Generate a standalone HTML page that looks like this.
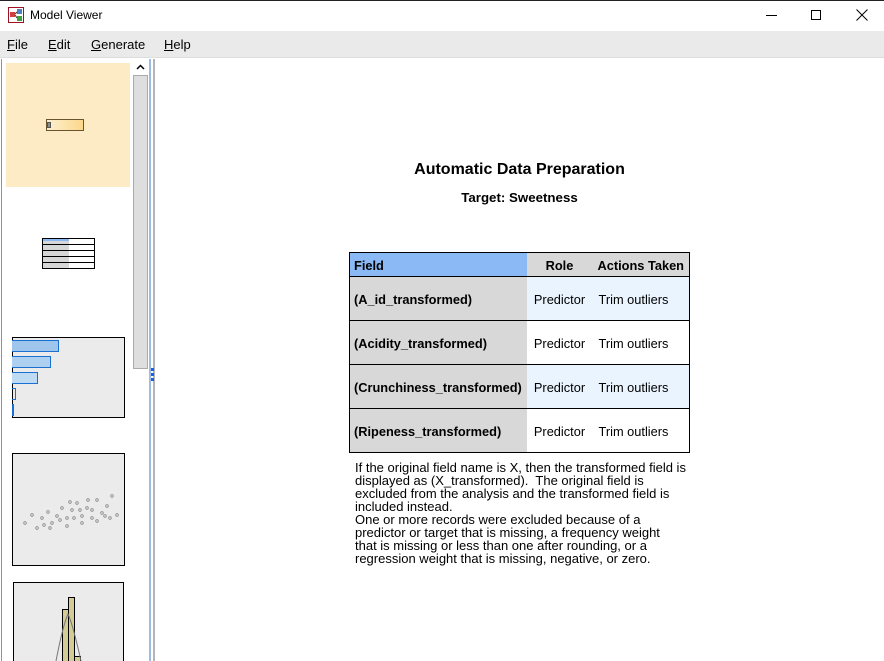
<!DOCTYPE html>
<html><head><meta charset="utf-8"><style>
*{margin:0;padding:0;box-sizing:border-box}
body{width:884px;height:661px;overflow:hidden;background:#fff;font-family:"Liberation Sans",Arial,sans-serif;position:relative}
.a{position:absolute}
.menu span{position:absolute;font-size:13px;color:#000}
table{border-collapse:collapse;position:absolute;left:349px;top:252px;width:341px;font-size:12.8px;table-layout:fixed}
td{border:1px solid #000;border-left:none;border-right:none;height:44px;padding:2px 4px 0 4px;white-space:nowrap}
</style></head><body>
<div class="a" style="left:0;top:0;width:884px;height:31px;background:#fff;border-top:1px solid #222"></div>
<svg class="a" style="left:8px;top:7px" width="16" height="16"><rect x="0.5" y="0.5" width="15" height="15" fill="#fff" stroke="#a01020"/><rect x="2" y="5" width="5" height="5" fill="#d04040"/><rect x="9" y="2" width="5" height="5" fill="#5080c0"/><rect x="9" y="9" width="5" height="5" fill="#40a040"/><path d="M7 7L9 5M7 8L9 11" stroke="#333"/></svg>
<div class="a" style="left:30px;top:8px;font-size:12px">Model Viewer</div>
<div class="a" style="left:766px;top:15px;width:11px;height:1px;background:#000"></div>
<div class="a" style="left:811px;top:10px;width:10px;height:10px;border:1px solid #000"></div>
<svg class="a" style="left:856px;top:9px" width="12" height="12"><path d="M0.5 0.5L11.5 11.5M11.5 0.5L0.5 11.5" stroke="#000"/></svg>
<div class="a menu" style="left:0;top:31px;width:884px;height:27px;background:#eaeaea;border-bottom:1px solid #ddd">
<span style="left:7px;top:6px"><u>F</u>ile</span><span style="left:48px;top:6px"><u>E</u>dit</span><span style="left:91px;top:6px"><u>G</u>enerate</span><span style="left:164px;top:6px"><u>H</u>elp</span></div>
<div class="a" style="left:1px;top:59px;width:1px;height:602px;background:#6a9ad8"></div>
<div class="a" style="left:6px;top:63px;width:124px;height:124px;background:#fdebc6"></div>
<div class="a" style="left:46px;top:119px;width:38px;height:12px;border:1px solid #6a5530;background:linear-gradient(90deg,#fdf0d0,#fbd88a)"></div>
<div class="a" style="left:47px;top:122px;width:4px;height:6px;background:#8a9088;border:1px solid #555"></div>
<div class="a" style="left:42px;top:238px;width:53px;height:31px;border:1px solid #000;background:repeating-linear-gradient(#fff 0 5px,#000 5px 6px)"></div>
<div class="a" style="left:43px;top:239px;width:26px;height:29px;background:repeating-linear-gradient(#d6d6d6 0 5px,#000 5px 6px)"></div>
<div class="a" style="left:43px;top:239px;width:26px;height:2px;background:#8ab9f5"></div>
<div class="a" style="left:12px;top:337px;width:113px;height:81px;border:1px solid #000;background:#ebebeb"></div>
<div class="a" style="left:12px;top:340px;width:47px;height:12px;background:#9fc5ec;border:1px solid #1a70d0;border-left:none"></div>
<div class="a" style="left:12px;top:356px;width:39px;height:12px;background:#add0f0;border:1px solid #1a70d0;border-left:none"></div>
<div class="a" style="left:12px;top:372px;width:26px;height:12px;background:#bfdaf3;border:1px solid #1a70d0;border-left:none"></div>
<div class="a" style="left:12px;top:388px;width:4px;height:12px;border:1px solid #1a70d0;border-left:none"></div>
<div class="a" style="left:12px;top:404px;width:2px;height:12px;background:#1a70d0"></div>
<div class="a" style="left:12px;top:453px;width:113px;height:113px;border:1px solid #000;background:#ebebeb"></div>
<svg class="a" style="left:22px;top:488px" width="100" height="45"><g fill="none" stroke="#888" stroke-width="0.8">
<circle cx="3" cy="35" r="1.3"/><circle cx="10" cy="27" r="1.3"/><circle cx="15" cy="40" r="1.3"/><circle cx="20" cy="30" r="1.3"/><circle cx="26" cy="24" r="1.3"/><circle cx="30" cy="35" r="1.3"/><circle cx="35" cy="28" r="1.3"/><circle cx="40" cy="20" r="1.3"/><circle cx="45" cy="30" r="1.3"/><circle cx="50" cy="22" r="1.3"/><circle cx="55" cy="15" r="1.3"/><circle cx="60" cy="28" r="1.3"/><circle cx="65" cy="20" r="1.3"/><circle cx="70" cy="30" r="1.3"/><circle cx="75" cy="12" r="1.3"/><circle cx="80" cy="25" r="1.3"/><circle cx="85" cy="18" r="1.3"/><circle cx="90" cy="8" r="1.3"/><circle cx="95" cy="27" r="1.3"/><circle cx="28" cy="40" r="1.3"/><circle cx="45" cy="38" r="1.3"/><circle cx="60" cy="35" r="1.3"/><circle cx="70" cy="22" r="1.3"/><circle cx="83" cy="28" r="1.3"/><circle cx="38" cy="32" r="1.3"/><circle cx="52" cy="30" r="1.3"/><circle cx="66" cy="12" r="1.3"/><circle cx="22" cy="37" r="1.3"/><circle cx="58" cy="22" r="1.3"/><circle cx="48" cy="14" r="1.3"/><circle cx="75" cy="33" r="1.3"/><circle cx="88" cy="30" r="1.3"/></g></svg>
<div class="a" style="left:13px;top:582px;width:111px;height:79px;border:1px solid #000;border-bottom:none;background:#ebebeb"></div>
<div class="a" style="left:62px;top:609px;width:7px;height:52px;background:#d4cc96;border:1px solid #000;border-bottom:none"></div>
<div class="a" style="left:68px;top:597px;width:7px;height:64px;background:#d4cc96;border:1px solid #000;border-bottom:none"></div>
<div class="a" style="left:74px;top:656px;width:7px;height:5px;background:#d4cc96;border:1px solid #000;border-bottom:none"></div>
<svg class="a" style="left:55px;top:610px" width="30" height="51"><path d="M1 51Q8 15 13 4Q18 15 26 51" fill="none" stroke="#777"/></svg>
<div class="a" style="left:133px;top:59px;width:15px;height:602px;background:#fff"></div>
<svg class="a" style="left:135px;top:63px" width="11" height="8"><path d="M2 6L5.5 2.5L9 6" fill="none" stroke="#000" stroke-width="1.5"/></svg>
<div class="a" style="left:133px;top:75px;width:15px;height:294px;background:#dedede;border:1px solid #aaa"></div>
<div class="a" style="left:149px;top:59px;width:2px;height:602px;background:#9bbde3"></div>
<div class="a" style="left:153px;top:59px;width:2px;height:602px;background:#b5b5b5"></div>
<div class="a" style="left:151px;top:368px;width:3px;height:3px;background:#1a5ef0"></div>
<div class="a" style="left:151px;top:373px;width:3px;height:3px;background:#1a5ef0"></div>
<div class="a" style="left:151px;top:378px;width:3px;height:3px;background:#1a5ef0"></div>
<div class="a" style="left:349px;top:161px;width:341px;text-align:center;font-size:16px;font-weight:bold">Automatic Data Preparation</div>
<div class="a" style="left:349px;top:190px;width:341px;text-align:center;font-size:13.3px;font-weight:bold">Target: Sweetness</div>
<table style="border:1px solid #000">
<colgroup><col style="width:177px"><col style="width:66px"><col></colgroup>
<tr style="height:24px"><td style="height:24px;background:#8ab9f5;font-weight:bold">Field</td><td style="height:24px;background:#d8d8d8;font-weight:bold;text-align:center">Role</td><td style="height:24px;background:#d8d8d8;font-weight:bold;text-align:center;padding:2px 0 0 0">Actions Taken</td></tr>
<tr><td style="background:#d8d8d8;font-weight:bold">(A_id_transformed)</td><td style="background:#eaf4fe;text-align:center">Predictor</td><td style="background:#eaf4fe;padding-left:6px">Trim outliers</td></tr>
<tr><td style="background:#d8d8d8;font-weight:bold">(Acidity_transformed)</td><td style="text-align:center">Predictor</td><td style="padding-left:6px">Trim outliers</td></tr>
<tr><td style="background:#d8d8d8;font-weight:bold;padding-left:4px">(Crunchiness_transformed)</td><td style="background:#eaf4fe;text-align:center">Predictor</td><td style="background:#eaf4fe;padding-left:6px">Trim outliers</td></tr>
<tr><td style="background:#d8d8d8;font-weight:bold">(Ripeness_transformed)</td><td style="text-align:center">Predictor</td><td style="padding-left:6px">Trim outliers</td></tr>
</table>
<div class="a" style="left:355px;top:461px;width:360px;font-size:13px;line-height:13px;white-space:nowrap">If the original field name is X, then the transformed field is<br>displayed as (X_transformed).&nbsp; The original field is<br>excluded from the analysis and the transformed field is<br>included instead.<br>One or more records were excluded because of a<br>predictor or target that is missing, a frequency weight<br>that is missing or less than one after rounding, or a<br>regression weight that is missing, negative, or zero.</div>
</body></html>
